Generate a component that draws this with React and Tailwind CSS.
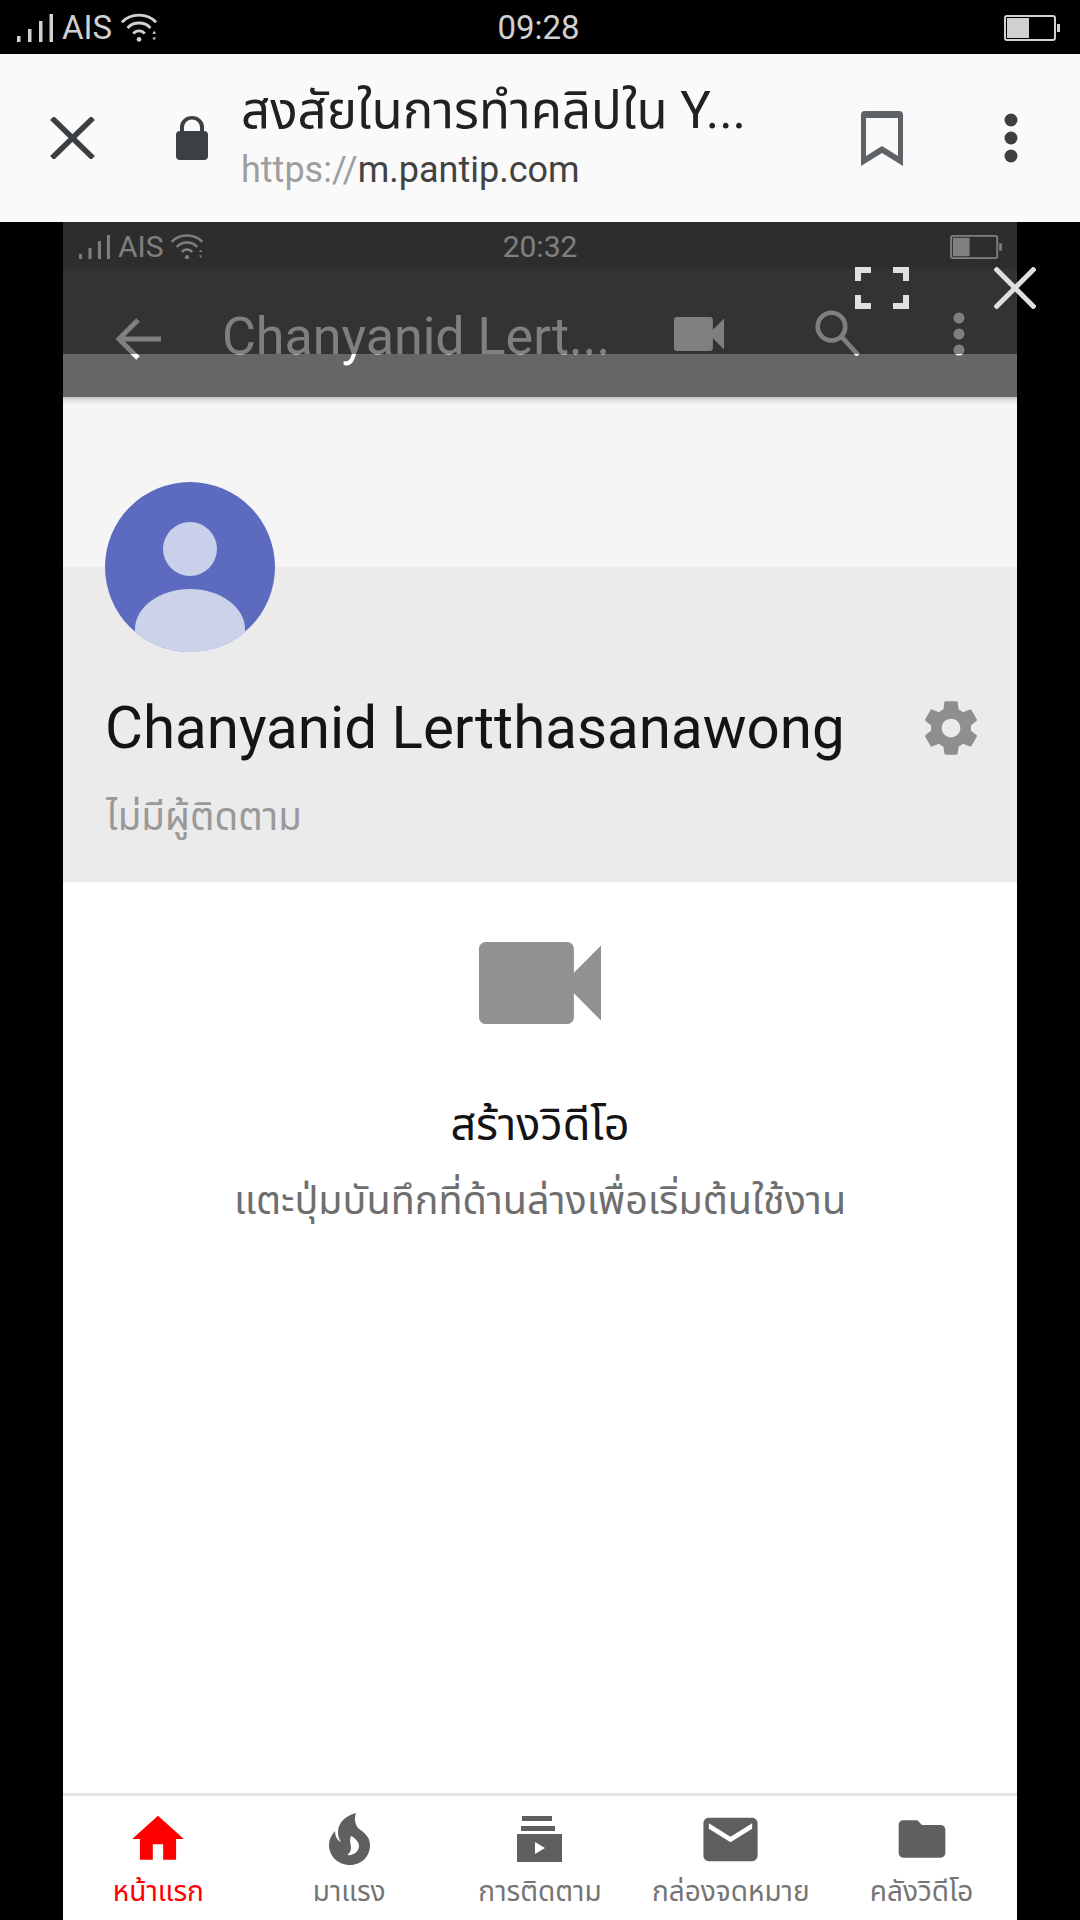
const FONT = { fontFamily: 'Roboto, "Noto Sans Thai", "Noto Sans", "DejaVu Sans", sans-serif' };

function Signal({ className }) {
  return (
    <svg viewBox="0 0 36 28" className={className} fill="currentColor">
      <rect x="0" y="22" width="3.500" height="6" />
      <rect x="11" y="15" width="3.500" height="13" />
      <rect x="22" y="7" width="3.500" height="21" />
      <rect x="32.500" y="0" width="3.500" height="28" />
    </svg>
  );
}

function Wifi({ className }) {
  return (
    <svg viewBox="0 0 40 30" className={className} fill="none" stroke="currentColor" strokeWidth="3">
      <path d="M2 9C11 -1 29 -1 38 9" />
      <path d="M8 15C14 8 26 8 32 15" />
      <path d="M14 21C17 17 23 17 26 21" />
      <circle cx="20" cy="27" r="2.500" fill="currentColor" stroke="none" />
      <path d="M34 21h4l-2-3zM34 25h4l-2 3z" fill="currentColor" stroke="none" />
    </svg>
  );
}

function Battery({ className, level }) {
  return (
    <svg viewBox="0 0 56 26" className={className} fill="none">
      <rect x="1" y="1" width="50" height="24" rx="2" stroke="currentColor" strokeWidth="2" />
      <rect x="3" y="3" width={level} height="20" fill="currentColor" />
      <rect x="53" y="9" width="3" height="8" fill="currentColor" />
    </svg>
  );
}

function StatusBar({ time, height, className, timeClass, batteryClass, level, signalClass, wifiClass }) {
  return (
    <div className={`grid grid-cols-3 items-center shrink-0 ${height} ${className}`} style={FONT}>
      <div className="flex items-center">
        <Signal className={signalClass} />
        <span className={timeClass}>AIS</span>
        <Wifi className={wifiClass} />
      </div>
      <div className={`text-center ${timeClass}`}>{time}</div>
      <div className="flex justify-end">
        <Battery className={batteryClass} level={level} />
      </div>
    </div>
  );
}

function BrowserBar() {
  return (
    <div className="h-[168px] shrink-0 bg-[#fafafa] flex items-center pl-[50px] text-[#3c4043]" style={FONT}>
      <svg viewBox="0 0 45 42" className="w-[45px] h-[42px] mr-[81px]" stroke="currentColor" strokeWidth="5.5" fill="none">
        <path d="M2 1L43 41M43 1L2 41" />
      </svg>
      <svg viewBox="0 0 32 44" className="w-[32px] h-[44px] mr-[33px]" fill="currentColor">
        <path d="M4 15V11a12 11 0 0 1 24 0v4h-4V11a8 7.500 0 0 0-16 0v4z" />
        <rect x="0" y="15" width="32" height="29" rx="4" />
      </svg>
      <div className="w-[620px] flex flex-col">
        <div className="text-[51px] leading-[56px] text-[#212121] whitespace-nowrap">สงสัยในการทำคลิปใน Y...</div>
        <div className="text-[36px] leading-[46px] mt-[8px] whitespace-nowrap text-[#424242]">
          <span className="text-[#9e9e9e]">https://</span>m.pantip.com
        </div>
      </div>
      <svg viewBox="0 0 42 55" className="w-[42px] h-[55px] mr-[101px] text-[#5f6368]" fill="currentColor">
        <path fillRule="evenodd" d="M4 0h34a4 4 0 0 1 4 4v51L21 42 0 55V4a4 4 0 0 1 4-4zM5 7v38l16-10 16 10V7z" />
      </svg>
      <svg viewBox="0 0 14 50" className="w-[14px] h-[50px]" fill="currentColor">
        <circle cx="7" cy="7" r="6.500" />
        <circle cx="7" cy="25" r="6.500" />
        <circle cx="7" cy="43" r="6.500" />
      </svg>
    </div>
  );
}

function Toolbar() {
  return (
    <div className="h-[128px] shrink-0 bg-[#666666] text-white relative" style={FONT}>
      <div className="flex items-start h-[85px] pt-[43px] pl-[52px]">
        <svg viewBox="0 0 46 42" className="w-[46px] h-[42px] mt-[6px] mr-[61px] shrink-0" fill="none" stroke="currentColor" strokeWidth="5">
          <path d="M46 21H4M23 2L4 21l19 19" />
        </svg>
        <div className="text-[52px] leading-[60px] w-[369px] whitespace-nowrap -mt-[5px] shrink-0">Chanyanid Lert...</div>
        <svg viewBox="3 6 18 12" className="w-[50px] h-[34px] ml-[83px] mt-[5px] shrink-0" fill="currentColor" preserveAspectRatio="none">
          <path d="M17 10.500V7c0-.55-.45-1-1-1H4c-.55 0-1 .45-1 1v10c0 .55.45 1 1 1h12c.55 0 1-.45 1-1v-3.500l4 4v-11l-4 4z" />
        </svg>
        <svg viewBox="0 0 48 50" className="w-[46px] h-[46px] ml-[90px] -mt-[2px] shrink-0" fill="none" stroke="currentColor" strokeWidth="5">
          <circle cx="18" cy="18" r="15" />
          <path d="M29 29l18 20" />
        </svg>
        <svg viewBox="0 0 12 44" className="w-[12px] h-[44px] ml-[93px] shrink-0" fill="currentColor">
          <circle cx="6" cy="6" r="5.500" />
          <circle cx="6" cy="22" r="5.500" />
          <circle cx="6" cy="38" r="5.500" />
        </svg>
      </div>
    </div>
  );
}

function Profile() {
  return (
    <div style={FONT}>
      <div className="h-[170px] bg-[#f5f5f5] shadow-[inset_0_8px_6px_-6px_rgba(0,0,0,0.25)]" />
      <div className="h-[315px] bg-[#ebebeb] px-[42px] relative">
        <svg viewBox="0 0 170 170" className="absolute left-[42px] -top-[85px] w-[170px] h-[170px]">
          <circle cx="85" cy="85" r="85" fill="#5c6bc0" />
          <circle cx="85" cy="67" r="27" fill="#c9d0ea" />
          <path d="M30 147V150A85 85 0 0 0 140 150V147C140 125 115 107 85 107S30 125 30 147z" fill="#cbd2ea" />
        </svg>
        <div className="flex items-center justify-between pt-[125px]">
          <div className="text-[58.300px] leading-[72px] text-[#141414] whitespace-nowrap">Chanyanid Lertthasanawong</div>
          <svg viewBox="0 0 24 24" className="w-[64px] h-[64px] -mr-[8px]" fill="#8f8f8f">
            <path d="M19.430 12.980c.04-.32.07-.64.07-.98s-.03-.66-.07-.98l2.110-1.650c.19-.15.24-.42.12-.64l-2-3.460c-.12-.22-.39-.3-.61-.22l-2.490 1c-.52-.4-1.080-.73-1.690-.98l-.38-2.650C14.460 2.180 14.250 2 14 2h-4c-.25 0-.46.18-.49.42l-.38 2.650c-.61.25-1.170.59-1.690.98l-2.490-1c-.23-.09-.49 0-.61.22l-2 3.460c-.13.22-.07.49.12.64l2.110 1.650c-.04.32-.07.65-.07.98s.03.66.07.98l-2.110 1.650c-.19.15-.24.42-.12.64l2 3.460c.12.22.39.3.61.22l2.490-1c.52.4 1.080.73 1.690.98l.38 2.650c.03.24.24.42.49.42h4c.25 0 .46-.18.49-.42l.38-2.650c.61-.25 1.170-.59 1.690-.98l2.490 1c.23.09.49 0 .61-.22l2-3.460c.12-.22.07-.49-.12-.64l-2.110-1.650zM12 15.500c-1.930 0-3.500-1.570-3.500-3.500s1.570-3.500 3.500-3.500 3.500 1.570 3.500 3.500-1.570 3.500-3.500 3.500z" />
          </svg>
        </div>
        <div className="text-[38.500px] leading-[44px] text-[#999999] mt-[31px] pl-[1px]">ไม่มีผู้ติดตาม</div>
      </div>
    </div>
  );
}

function EmptyState() {
  return (
    <div className="flex-1 bg-white flex flex-col items-center pt-[60px]" style={FONT}>
      <svg viewBox="3 6 18 12" className="w-[122px] h-[82px]" fill="#919191" preserveAspectRatio="none">
        <path d="M17 10.500V7c0-.55-.45-1-1-1H4c-.55 0-1 .45-1 1v10c0 .55.45 1 1 1h12c.55 0 1-.45 1-1v-3.500l4 4v-11l-4 4z" />
      </svg>
      <div className="text-[45px] leading-[50px] text-[#141414] mt-[76px]">สร้างวิดีโอ</div>
      <div className="text-[39.500px] leading-[44px] text-[#6e6e6e] mt-[29px] whitespace-nowrap">แตะปุ่มบันทึกที่ด้านล่างเพื่อเริ่มต้นใช้งาน</div>
    </div>
  );
}

const tabs = [
  {
    label: 'หน้าแรก',
    icon: (
      <svg viewBox="0 0 24 24" className="w-[62px] h-[62px]" fill="currentColor">
        <path d="M10 20v-6h4v6h5v-8h3L12 3 2 12h3v8z" />
      </svg>
    ),
  },
  {
    label: 'มาแรง',
    icon: (
      <svg viewBox="0 0 41 52" className="w-[41px] h-[52px]" fill="currentColor">
        <path fillRule="evenodd" d="M27 0C16 3 9 10 9 19C9 23 10 26 12 29C8 27 6 23 6 18C2 22 0 27 0 32C0 43 9 52 21 52C33 52 41 43 41 32C41 23 34 19 29 15C26 11 25 5 27 0zM22 23C20 27 22 31 22 35C22 38 20 41 18 42C25 43 30 38 30 33C30 29 26 25 22 23z" />
      </svg>
    ),
  },
  {
    label: 'การติดตาม',
    icon: (
      <svg viewBox="0 0 45 46" className="w-[45px] h-[46px]" fill="currentColor">
        <rect x="5" y="0" width="30" height="5" />
        <rect x="4" y="10" width="34" height="5" />
        <path fillRule="evenodd" d="M0 18h45v28H0zM18 26v12l10-6z" />
      </svg>
    ),
  },
  {
    label: 'กล่องจดหมาย',
    icon: (
      <svg viewBox="0 0 24 24" className="w-[65px] h-[65px]" fill="currentColor">
        <path d="M20 4H4c-1.100 0-1.990.9-1.990 2L2 18c0 1.100.9 2 2 2h16c1.100 0 2-.9 2-2V6c0-1.100-.9-2-2-2zm0 4l-8 5-8-5V6l8 5 8-5v2z" />
      </svg>
    ),
  },
  {
    label: 'คลังวิดีโอ',
    icon: (
      <svg viewBox="0 0 24 24" className="w-[56px] h-[56px]" fill="currentColor">
        <path d="M10 4H4c-1.100 0-1.990.9-1.990 2L2 18c0 1.100.9 2 2 2h16c1.100 0 2-.9 2-2V8c0-1.100-.9-2-2-2h-8l-2-2z" />
      </svg>
    ),
  },
];

function BottomNav() {
  return (
    <div className="h-[127px] shrink-0 bg-white border-t-[3px] border-[#e4e4e4] grid grid-cols-5" style={FONT}>
      {tabs.map((tab, i) => (
        <div key={tab.label} className={`flex flex-col items-center ${i === 0 ? 'text-[#ff0000]' : 'text-[#5f5f5f]'}`}>
          <div className="h-[78px] flex items-center justify-center pt-[8px]">{tab.icon}</div>
          <div className={`text-[28px] leading-[36px] whitespace-nowrap ${i === 0 ? 'text-[#ff0000]' : 'text-[#757575]'}`}>{tab.label}</div>
        </div>
      ))}
    </div>
  );
}

export default function App() {
  return (
    <div className="w-[1080px] h-[1920px] bg-black flex flex-col overflow-hidden">
      <StatusBar
        time="09:28"
        height="h-[54px]"
        className="text-[#d0d0d0] pl-[17px] pr-[20px] pt-[1px]"
        timeClass="text-[33px] leading-none"
        signalClass="w-[36px] h-[28px] mr-[9px]"
        wifiClass="w-[38px] h-[30px] ml-[8px]"
        batteryClass="w-[56px] h-[26px]"
        level={22}
      />
      <BrowserBar />
      <div className="flex-1 px-[63px] flex min-h-0">
        <div className="relative w-full flex flex-col">
          <StatusBar
            time="20:32"
            height="h-[47px]"
            className="bg-[#5a5a5a] text-white pl-[15px] pr-[15px] pt-[3px]"
            timeClass="text-[30px] leading-none"
            signalClass="w-[33px] h-[24px] mr-[7px]"
            wifiClass="w-[34px] h-[26px] ml-[6px]"
            batteryClass="w-[52px] h-[24px]"
            level={18}
          />
          <Toolbar />
          <Profile />
          <EmptyState />
          <BottomNav />
          {/* dim overlay on top of the video header */}
          <div className="absolute left-0 right-0 top-0 h-[132px] bg-black/50" />
          <svg viewBox="0 0 54 42" className="absolute left-[792px] top-[45px] w-[54px] h-[42px]" fill="none" stroke="#e0e0e0" strokeWidth="6">
            <path d="M3 14V3h13M38 3h13v11M3 28v11h13M38 39h13V28" />
          </svg>
          <svg viewBox="0 0 42 42" className="absolute left-[931px] top-[45px] w-[42px] h-[42px]" fill="none" stroke="#e0e0e0" strokeWidth="5">
            <path d="M1 1L41 41M41 1L1 41" />
          </svg>
        </div>
      </div>
    </div>
  );
}
